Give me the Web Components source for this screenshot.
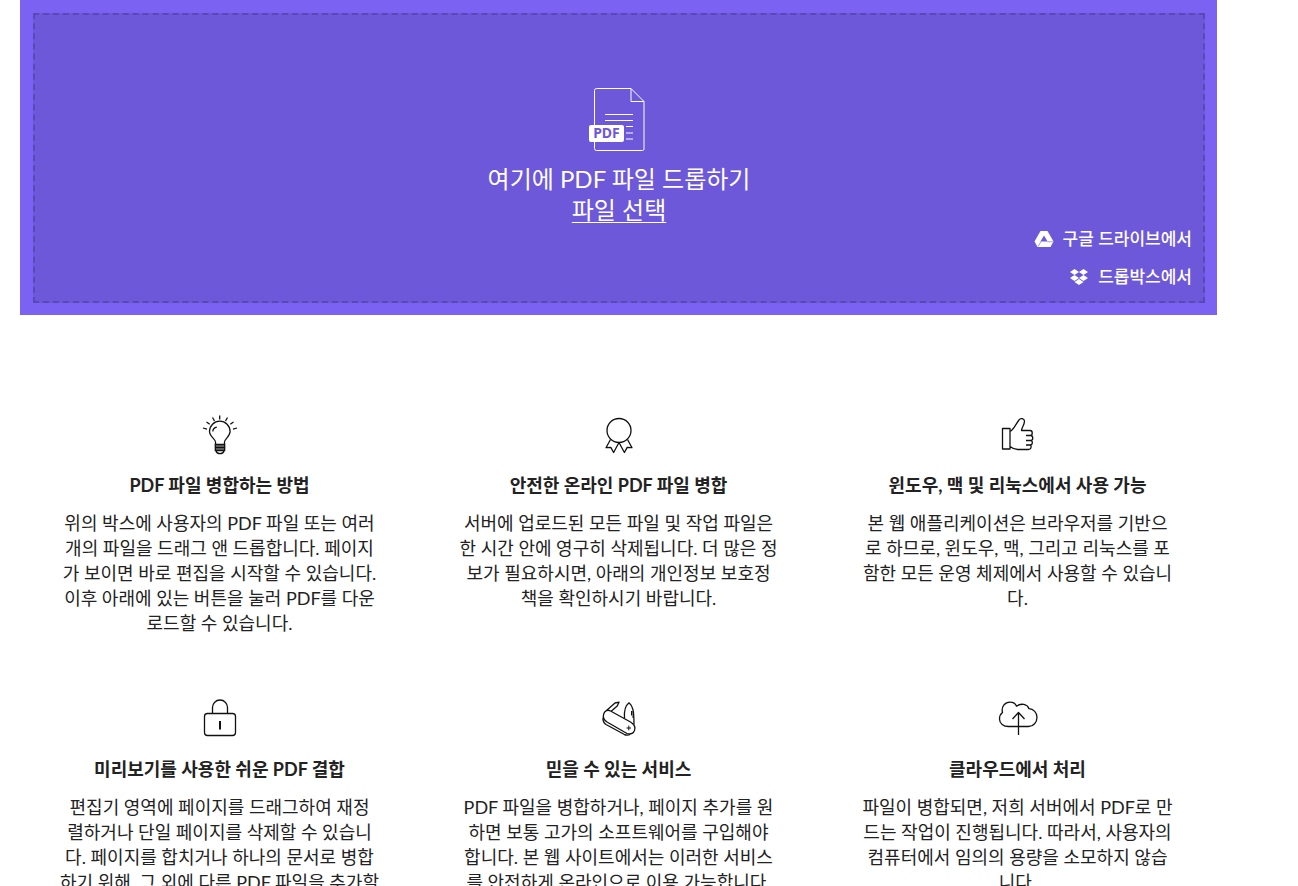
<!DOCTYPE html>
<html lang="ko">
<head>
<meta charset="utf-8">
<title>PDF 파일 병합</title>
<style>
    html { scrollbar-width: none; }
    body {
        margin: 0;
        background: #fff;
        color: #222;
        font: 18px/25px Lato, "Noto Sans CJK KR", sans-serif;
    }
</style>
</head>
<body>

<merge-page>
    <drop-zone slot="hero">
        <span slot="title">여기에 PDF 파일 드롭하기</span>
        <span slot="pick">파일 선택</span>
        <cloud-link slot="cloud" href="#google-drive">
            <svg slot="icon" viewBox="0 0 20 18"><path fill="#fff" d="M6.500 1h7L19.500 11.500 16.500 17h-13L.5 11.500z"/><path fill="#6d58d9" d="M10 5.500l3.600 6H6.400z"/><path d="M4 16.500l3-5M13.500 11.800h5.500" fill="none" stroke="#6d58d9" stroke-width=".6"/></svg>
            구글 드라이브에서
        </cloud-link>
        <cloud-link slot="cloud" href="#dropbox">
            <svg slot="icon" viewBox="0 0 20 18"><path fill="#fff" d="M5.500 1L10 4 5.500 7 1 4zM14.500 1L19 4l-4.500 3L10 4zM5.500 7l4.500 3-4.500 3L1 10zM14.500 7l4.500 3-4.500 3-4.500-3zM10 11l4.500 3L10 17l-4.500-3z"/></svg>
            드롭박스에서
        </cloud-link>
    </drop-zone>

    <feature-item>
        <svg slot="icon" viewBox="6 6 48 48">
            <path d="M25.500 39.500v-2.500c0-3-6-5.500-6-10.500a10.300 10.300 0 0 1 20.600 0c0 5-5.600 7.500-5.600 10.500v2.500M22.800 26.500c.2-2.500 1.800-4 4-4.300"/>
            <path fill="#777" d="M25.300 39.500h9.400v6h-9.400z"/>
            <path d="M25 42.500h10M26 46c.8 3.500 7.200 3.500 8 0M29.700 10.500v4M22.500 12.500l2 3.500M16.500 17l3.200 2.300M13 23l4 1.200M37.500 12.500l-2 3.500M43.500 17l-3.200 2.300M47 23l-4 1.200"/>
        </svg>
        <span slot="title">PDF 파일 병합하는 방법</span>
        위의 박스에 사용자의 PDF 파일 또는 여러<br>개의 파일을 드래그 앤 드롭합니다. 페이지<br>가 보이면 바로 편집을 시작할 수 있습니다.<br>이후 아래에 있는 버튼을 눌러 PDF를 다운<br>로드할 수 있습니다.
    </feature-item>

    <feature-item>
        <svg slot="icon" viewBox="5 6 48 48">
            <circle cx="29" cy="25.500" r="12"/>
            <path d="M20.500 34.500L16 42.700l4.800-.3 2.800 5.100 5.400-10 5.400 10 2.800-5.100 4.800.3-4.500-8.200"/>
        </svg>
        <span slot="title">안전한 온라인 PDF 파일 병합</span>
        서버에 업로드된 모든 파일 및 작업 파일은<br>한 시간 안에 영구히 삭제됩니다. 더 많은 정<br>보가 필요하시면, 아래의 개인정보 보호정<br>책을 확인하시기 바랍니다.
    </feature-item>

    <feature-item>
        <svg slot="icon" viewBox="4 6 48 48">
            <path d="M12.500 23.500h7.500v20.500h-7.500zM20 26.500c3.500-1.500 5.500-7 9-11.500 1.600-2.500 5.500-1.300 5.500 1.300 0 3.200-3 6.700-3 9.200h8.500c3 0 3 5 0 5h-4M40 30.500h.5c3 0 3 5 0 5H36M40.500 35.500c2.500 0 2.500 4.500-.5 4.500h-4M39.500 40c2.500 0 2 4.500-1 4.500h-10c-4 0-5.500-.5-8.500-3"/>
        </svg>
        <span slot="title">윈도우, 맥 및 리눅스에서 사용 가능</span>
        본 웹 애플리케이션은 브라우저를 기반으<br>로 하므로, 윈도우, 맥, 그리고 리눅스를 포<br>함한 모든 운영 체제에서 사용할 수 있습니<br>다.
    </feature-item>

    <feature-item>
        <svg slot="icon" viewBox="6 5 48 48">
            <rect x="14.500" y="23.500" width="31" height="22" rx="3"/>
            <path d="M22.500 23.500v-6a7.500 7.500 0 0 1 15 0v6"/>
            <path stroke-width="2" d="M30 31v8.500"/>
        </svg>
        <span slot="title">미리보기를 사용한 쉬운 PDF 결합</span>
        편집기 영역에 페이지를 드래그하여 재정<br>렬하거나 단일 페이지를 삭제할 수 있습니<br>다. 페이지를 합치거나 하나의 문서로 병합<br>하기 위해, 그 외에 다른 PDF 파일을 추가할<br>수 있습니다.
    </feature-item>

    <feature-item>
        <svg slot="icon" viewBox="5 5 48 48">
            <path d="M20.500 21l20 11c7.500 4.500 4.500 14-3.500 11.500L17 32c-7-4.500-2.500-14.500 3.500-11zM13 27.500c-.3 3 .8 5.500 3 7L34 44.300c2 1 4 1.300 6 .2"/>
            <path d="M16.500 20.500l8.500-7.500 4-.8-1.800 3.800-6 5.200M34.500 28.300c-.5-6 0-12 4.500-15.500 3.800 3 5 7.500 5 22"/>
            <path stroke-width="1" d="M41.500 21v4.500M43 21v7M36.500 38l4.500 0M38.800 35.700v4.600"/>
        </svg>
        <span slot="title">믿을 수 있는 서비스</span>
        PDF 파일을 병합하거나, 페이지 추가를 원<br>하면 보통 고가의 소프트웨어를 구입해야<br>합니다. 본 웹 사이트에서는 이러한 서비스<br>를 안전하게 온라인으로 이용 가능합니다.
    </feature-item>

    <feature-item>
        <svg slot="icon" viewBox="4 5 48 48">
            <path d="M18.500 36.500c-5 0-9-3-9-7.500 0-3 1-5 3-6.500-1.500-6 2.500-10.300 7.500-10.300 3 0 5.500 1.500 6.500 4 4.500-3.500 11-2 12.500 2.500 4.500.2 8 4 8 8.500 0 5-3.500 9.300-8.500 9.300zM28.500 45V22.500M22.500 29l6-6.500 6 6.500"/>
        </svg>
        <span slot="title">클라우드에서 처리</span>
        파일이 병합되면, 저희 서버에서 PDF로 만<br>드는 작업이 진행됩니다. 따라서, 사용자의<br>컴퓨터에서 임의의 용량을 소모하지 않습<br>니다.
    </feature-item>
</merge-page>

<script>
class MergePage extends HTMLElement {

constructor() {
    super();

    this.attachShadow({mode: "open"});
    this.shadowRoot.innerHTML = `
        <style>
            :host {
                display: block;
                margin: 0 81px 0 20px;
            }
            .features {
                display: grid;
                grid-template-columns: repeat(3, 1fr);
                row-gap: 59px;
                padding: 96px 0 60px;
            }
        </style>
        <slot name="hero"></slot>
        <main class="features"><slot></slot></main>
    `;
}
}

/**
 * 파일을 끌어다 놓는 영역
 */
class DropZone extends HTMLElement {

constructor() {
    super();

    this.attachShadow({mode: "open"});
    this.shadowRoot.innerHTML = `
        <style>
            :host {
                display: block;
                padding: 13px 12px 12px 13px;
                background: #7b62f2;
                color: #fff;
            }
            .zone {
                display: flex;
                flex-direction: column;
                align-items: center;
                padding: 73px 11px 11px;
                border: 2px dashed #5a49b4;
                background: #6d58d9;
            }
            .file {
                display: block;
                width: 60px;
                height: 64px;
                margin-bottom: 11px;
            }
            .file text {
                font: bold 14px "Noto Sans", sans-serif;
            }
            p {
                margin: 0;
                font-size: 24px;
                line-height: 31px;
            }
            button {
                padding: 0;
                border: 0;
                background: none;
                color: inherit;
                font: inherit;
                font-size: 24px;
                line-height: 31px;
                text-decoration: underline;
                text-decoration-thickness: 1px;
                text-underline-offset: 3px;
                cursor: pointer;
            }
            input { display: none; }
            .cloud {
                display: flex;
                flex-direction: column;
                align-items: flex-end;
                align-self: flex-end;
                gap: 12px;
                margin-top: 1px;
            }
        </style>
        <div class="zone">
            <svg class="file" viewBox="0 0 60 64" aria-hidden="true">
                <path d="M5.500 37V2.500q0-2 2-2H42l13 13V61q0 1.500-1.500 1.500h-46q-2 0-2-2V54M42 .5v13h13" fill="none" stroke="#fff"/>
                <path d="M16 26.500h28M16 32.500h28M37 38.500h7M37 45h7M37 51h7" fill="none" stroke="#fff"/>
                <rect x="0" y="37" width="35" height="17" rx="2" fill="#fff"/>
                <text x="17.500" y="50" text-anchor="middle" fill="#6d58d9">PDF</text>
            </svg>
            <p><slot name="title"></slot></p>
            <button type="button"><slot name="pick"></slot></button>
            <input type="file" accept="application/pdf" multiple aria-label="PDF">
            <div class="cloud"><slot name="cloud"></slot></div>
        </div>
    `;
}

connectedCallback() {
    let lInput = this.shadowRoot.querySelector('input');
    this.shadowRoot.querySelector('button').onclick = () => lInput.click();
}
}

class CloudLink extends HTMLElement {

constructor() {
    super();

    this.attachShadow({mode: "open"});
    this.shadowRoot.innerHTML = `
        <style>
            :host { display: block; }
            a {
                display: flex;
                align-items: center;
                gap: 9px;
                color: #fff;
                font-size: 17px;
                font-weight: 500;
                line-height: 26px;
                text-decoration: none;
            }
            ::slotted(svg) {
                display: block;
                width: 20px;
                height: 18px;
            }
        </style>
        <a><slot name="icon"></slot><span><slot></slot></span></a>
    `;
}

connectedCallback() {
    this.shadowRoot.querySelector('a').href = this.getAttribute('href');
}
}

/**
 * 아이콘, 제목, 설명으로 된 소개 항목
 */
class FeatureItem extends HTMLElement {

constructor() {
    super();

    this.attachShadow({mode: "open"});
    this.shadowRoot.innerHTML = `
        <style>
            :host {
                display: block;
                padding: 0 36px;
                text-align: center;
            }
            ::slotted(svg) {
                display: block;
                width: 48px;
                height: 48px;
                margin: 0 auto 14px;
                fill: none;
                stroke: #111;
                stroke-width: 1.3;
                stroke-linejoin: round;
            }
            h2 {
                margin: 0 0 13px;
                font-size: 18px;
                font-weight: 700;
                line-height: 25px;
            }
            p { margin: 0; }
        </style>
        <slot name="icon"></slot>
        <h2><slot name="title"></slot></h2>
        <p><slot></slot></p>
    `;
}
}

customElements.define('merge-page', MergePage);
customElements.define('drop-zone', DropZone);
customElements.define('cloud-link', CloudLink);
customElements.define('feature-item', FeatureItem);
</script>
</body>
</html>
